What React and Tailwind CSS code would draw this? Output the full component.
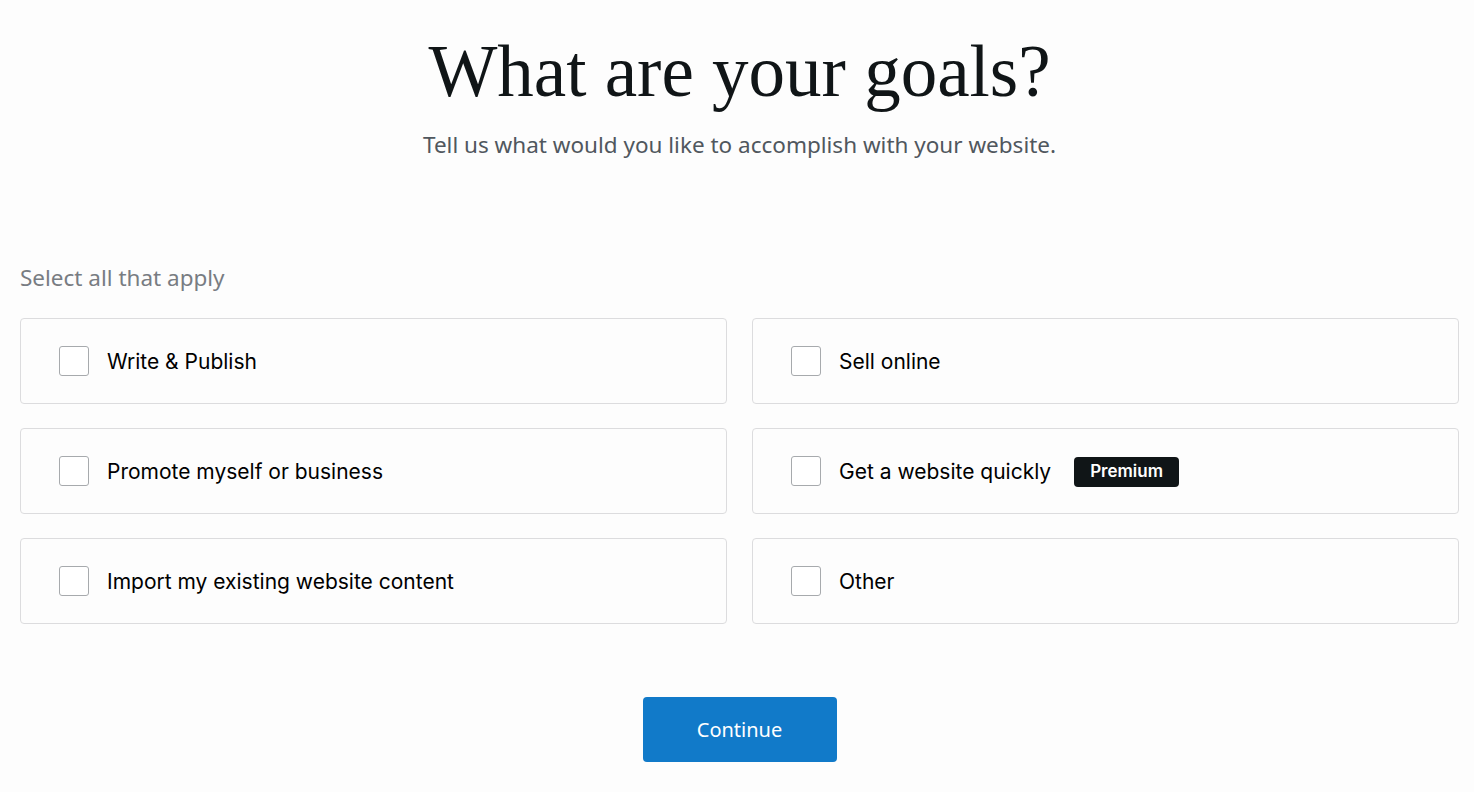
import { useState } from "react";

const GOALS = [
  { id: "write", label: "Write & Publish" },
  { id: "sell", label: "Sell online" },
  { id: "promote", label: "Promote myself or business" },
  { id: "quick", label: "Get a website quickly", badge: "Premium" },
  { id: "import", label: "Import my existing website content" },
  { id: "other", label: "Other" },
];

export default function App() {
  const [selected, setSelected] = useState([]);

  const toggle = (id) =>
    setSelected((s) => (s.includes(id) ? s.filter((x) => x !== id) : [...s, id]));

  return (
    <div className="min-h-screen bg-[#fdfdfd] pl-5 pr-[15px] font-['Inter',sans-serif]">
      <div className="flex flex-col items-center pt-[30px]">
        <h1 className="font-['Liberation_Serif',serif] text-[73px] leading-[84px] text-[#101517]">
          What are your goals?
        </h1>
        <p className="mt-[16px] font-['Noto_Sans',sans-serif] text-[22.5px] leading-[30px] text-[#50575e]">
          Tell us what would you like to accomplish with your website.
        </p>
      </div>

      <div className="mt-[104px] font-['Noto_Sans',sans-serif] text-[22.5px] leading-[28px] text-[#787c82]">
        Select all that apply
      </div>

      <div className="mt-[26px] grid grid-cols-2 gap-x-[25px] gap-y-[24px]">
        {GOALS.map((g) => {
          const on = selected.includes(g.id);
          return (
            <label
              key={g.id}
              className="flex h-[86px] cursor-pointer items-center rounded-[4px] border border-[#dcdcde] bg-[#fdfdfd] pl-[38px]"
            >
              <input type="checkbox" className="hidden" checked={on} onChange={() => toggle(g.id)} />
              <span
                className={`flex h-[30px] w-[30px] items-center justify-center rounded-[3px] border ${
                  on ? "border-[#117ac9] bg-[#117ac9]" : "border-[#a7aaad] bg-white"
                }`}
              >
                {on && (
                  <svg width="18" height="18" viewBox="0 0 24 24" fill="none" stroke="white" strokeWidth="3">
                    <path d="M5 12l5 5 9-10" />
                  </svg>
                )}
              </span>
              <span className="ml-[18px] pt-[2px] text-[21px] leading-[28px] text-[#000]">{g.label}</span>
              {g.badge && (
                <span className="ml-[23px] mt-[2px] flex h-[30px] items-center rounded-[4px] bg-[#101517] px-[16px] text-[17px] font-semibold text-white">
                  {g.badge}
                </span>
              )}
            </label>
          );
        })}
      </div>

      <div className="mt-[73px] flex justify-center pb-[30px]">
        <button className="h-[65px] w-[194px] rounded-[4px] bg-[#117ac9] font-['Noto_Sans',sans-serif] text-[20px] text-white">
          Continue
        </button>
      </div>
    </div>
  );
}
